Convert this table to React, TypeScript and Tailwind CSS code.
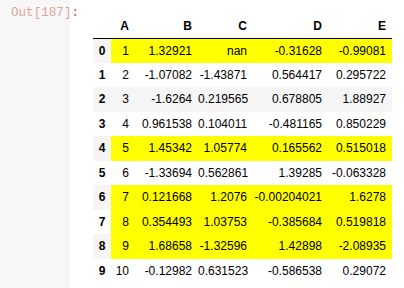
import React from 'react';

const rows: [number, number, string, string, string, string][] = [
  [0, 1, '1.32921', 'nan', '-0.31628', '-0.99081'],
  [1, 2, '-1.07082', '-1.43871', '0.564417', '0.295722'],
  [2, 3, '-1.6264', '0.219565', '0.678805', '1.88927'],
  [3, 4, '0.961538', '0.104011', '-0.481165', '0.850229'],
  [4, 5, '1.45342', '1.05774', '0.165562', '0.515018'],
  [5, 6, '-1.33694', '0.562861', '1.39285', '-0.063328'],
  [6, 7, '0.121668', '1.2076', '-0.00204021', '1.6278'],
  [7, 8, '0.354493', '1.03753', '-0.385684', '0.519818'],
  [8, 9, '1.68658', '-1.32596', '1.42898', '-2.08935'],
  [9, 10, '-0.12982', '0.631523', '-0.586538', '0.29072'],
];

const highlighted = [0, 4, 6, 7, 8];

export default function App() {
  return (
    <div className="flex w-[404px] h-[288px] bg-white overflow-hidden font-['Liberation_Sans',Arial,sans-serif] text-[12px] text-black">
      <div className="w-[70px] shrink-0 bg-[#f7f7f7] pt-[3px] pl-[11px]">
        <span className="font-['Liberation_Mono',monospace] text-[12.6px] leading-[15px] text-[#dba59f]">
          Out[187]<span className="text-[#d0524a]">:</span>
        </span>
      </div>

      <div className="pl-[23px] pt-[15px]">
        <table className="table-fixed border-collapse w-[299px]">
          <colgroup>
            <col className="w-[18px]" />
            <col className="w-[24px]" />
            <col className="w-[63px]" />
            <col className="w-[55px]" />
            <col className="w-[75px]" />
            <col className="w-[64px]" />
          </colgroup>
          <thead>
            <tr className="h-[23px] border-b border-black">
              <th></th>
              {['A', 'B', 'C', 'D', 'E'].map((h) => (
                <th key={h} className="text-right font-bold pr-[6px]">
                  {h}
                </th>
              ))}
            </tr>
          </thead>
          <tbody>
            {rows.map(([i, a, b, c, d, e]) => {
              const stripe = i % 2 === 0 ? 'bg-[#f5f5f5]' : 'bg-white';
              const cell = highlighted.includes(i) ? 'bg-[#ffff00]' : stripe;
              return (
                <tr key={i} className={`h-[24.5px] ${stripe}`}>
                  <th className="text-center font-bold">{i}</th>
                  {[String(a), b, c, d, e].map((v, j) => (
                    <td key={j} className={`text-right pr-[6px] whitespace-nowrap ${cell}`}>
                      {v}
                    </td>
                  ))}
                </tr>
              );
            })}
          </tbody>
        </table>
      </div>
    </div>
  );
}
